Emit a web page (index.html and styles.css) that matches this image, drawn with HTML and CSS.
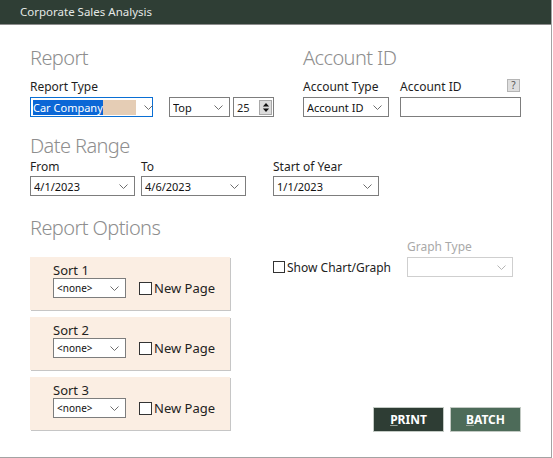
FILE: index.html
```html
<!DOCTYPE html>
<html lang="en">

<head>
    <meta charset="UTF-8">
    <meta name="viewport" content="width=device-width, initial-scale=1.0">
    <title>Corporate Sales Analysis</title>
    <link rel="stylesheet" href="styles.css">
</head>

<body>
    <div class="window">
        <div class="titlebar">Corporate Sales Analysis</div>

        <div class="content">
            <!-- Report / Account ID -->
            <div class="top">
                <section class="report">
                    <h2 class="heading">Report</h2>
                    <label class="lbl">Report Type</label>
                    <div class="row">
                        <div class="combo combo-type">
                            <span class="value"><span class="sel">Car Company</span></span>
                            <svg class="chev" viewBox="0 0 9 5"><path d="M0.5 0.5 L4.5 4.5 L8.5 0.5" /></svg>
                        </div>
                        <div class="combo combo-top">
                            <span class="value">Top</span>
                            <svg class="chev" viewBox="0 0 9 5"><path d="M0.5 0.5 L4.5 4.5 L8.5 0.5" /></svg>
                        </div>
                        <div class="spin">
                            <span class="value">25</span>
                            <span class="spin-btn">
                                <svg viewBox="0 0 9 12"><path d="M1 5 L4.5 1 L8 5 Z M1 7 L8 7 L4.5 11 Z" /></svg>
                            </span>
                        </div>
                    </div>
                </section>

                <section class="account">
                    <h2 class="heading">Account ID</h2>
                    <div class="fields">
                        <div class="field field-acctype">
                            <label class="lbl">Account Type</label>
                            <div class="combo">
                                <span class="value">Account ID</span>
                                <svg class="chev" viewBox="0 0 9 5"><path d="M0.5 0.5 L4.5 4.5 L8.5 0.5" /></svg>
                            </div>
                        </div>
                        <div class="field field-accid">
                            <div class="lbl lbl-row">
                                <span>Account ID</span>
                                <span class="help">?</span>
                            </div>
                            <div class="textbox"></div>
                        </div>
                    </div>
                </section>
            </div>

            <!-- Date Range -->
            <section class="dates">
                <h2 class="heading">Date Range</h2>
                <div class="date-row">
                    <div class="field field-from">
                        <label class="lbl">From</label>
                        <div class="combo">
                            <span class="value">4/1/2023</span>
                            <svg class="chev" viewBox="0 0 9 5"><path d="M0.5 0.5 L4.5 4.5 L8.5 0.5" /></svg>
                        </div>
                    </div>
                    <div class="field field-to">
                        <label class="lbl">To</label>
                        <div class="combo">
                            <span class="value">4/6/2023</span>
                            <svg class="chev" viewBox="0 0 9 5"><path d="M0.5 0.5 L4.5 4.5 L8.5 0.5" /></svg>
                        </div>
                    </div>
                    <div class="field field-soy">
                        <label class="lbl">Start of Year</label>
                        <div class="combo">
                            <span class="value">1/1/2023</span>
                            <svg class="chev" viewBox="0 0 9 5"><path d="M0.5 0.5 L4.5 4.5 L8.5 0.5" /></svg>
                        </div>
                    </div>
                </div>
            </section>

            <!-- Report Options -->
            <section class="options">
                <div class="options-left">
                    <h2 class="heading">Report Options</h2>
                    <div class="sort-panel">
                        <div class="sort-label">Sort 1</div>
                        <div class="sort-row">
                            <div class="combo combo-sort">
                                <span class="value">&lt;none&gt;</span>
                                <svg class="chev" viewBox="0 0 9 5"><path d="M0.5 0.5 L4.5 4.5 L8.5 0.5" /></svg>
                            </div>
                            <label class="check"><span class="box"></span>New Page</label>
                        </div>
                    </div>
                    <div class="sort-panel">
                        <div class="sort-label">Sort 2</div>
                        <div class="sort-row">
                            <div class="combo combo-sort">
                                <span class="value">&lt;none&gt;</span>
                                <svg class="chev" viewBox="0 0 9 5"><path d="M0.5 0.5 L4.5 4.5 L8.5 0.5" /></svg>
                            </div>
                            <label class="check"><span class="box"></span>New Page</label>
                        </div>
                    </div>
                    <div class="sort-panel">
                        <div class="sort-label">Sort 3</div>
                        <div class="sort-row">
                            <div class="combo combo-sort">
                                <span class="value">&lt;none&gt;</span>
                                <svg class="chev" viewBox="0 0 9 5"><path d="M0.5 0.5 L4.5 4.5 L8.5 0.5" /></svg>
                            </div>
                            <label class="check"><span class="box"></span>New Page</label>
                        </div>
                    </div>
                </div>

                <div class="options-right">
                    <div class="chart-row">
                        <label class="check check-chart"><span class="box"></span>Show Chart/Graph</label>
                        <div class="field field-graph">
                            <label class="lbl lbl-disabled">Graph Type</label>
                            <div class="combo combo-disabled">
                                <span class="value"></span>
                                <svg class="chev" viewBox="0 0 9 5"><path d="M0.5 0.5 L4.5 4.5 L8.5 0.5" /></svg>
                            </div>
                        </div>
                    </div>
                    <div class="actions">
                        <button class="btn btn-print"><u>P</u>RINT</button>
                        <button class="btn btn-batch"><u>B</u>ATCH</button>
                    </div>
                </div>
            </section>
        </div>
    </div>
</body>

</html>
```

FILE: styles.css
```css
body {
    margin: 0;
    padding: 0;
    font-family: "Noto Sans", "Open Sans", sans-serif;
    background: #fff;
    color: #1e1e1e;
}

/* 窗口外框 */
.window {
    width: 551px;
    height: 457px;
    border-right: 1px solid #a3a3a3;
    border-bottom: 1px solid #a3a3a3;
    overflow: hidden;
}

.titlebar {
    height: 24px;
    line-height: 24px;
    border-bottom: 1px solid #8c8c8c;
    background: #2f3e35;
    color: #e4e8e5;
    font-size: 11.5px;
    padding-left: 20px;
}

.content {
    padding: 21px 30px 0;
}

.heading {
    margin: 0;
    font-size: 20px;
    line-height: 24px;
    font-weight: 300;
    letter-spacing: -0.6px;
    color: #8e8e8e;
}

.lbl {
    display: block;
    font-size: 12px;
    line-height: 16px;
    color: #1e1e1e;
}

/* 下拉框 */
.combo {
    height: 20px;
    box-sizing: border-box;
    border: 1px solid #7d7d7d;
    background: #fff;
    display: flex;
    align-items: center;
    padding: 0 6px 0 3px;
    font-size: 11px;
    color: #111;
}

.combo .value {
    flex: 1;
    white-space: nowrap;
    overflow: hidden;
}

.chev {
    width: 9px;
    height: 5px;
    flex: none;
}

.chev path {
    fill: none;
    stroke: #6e6e6e;
    stroke-width: 1;
}

/* Report */
.top {
    display: flex;
}

.report {
    width: 273px;
}

.report .lbl {
    margin-top: 9px;
}

.row {
    display: flex;
    margin-top: 2px;
}

.combo-type {
    width: 123px;
    border-color: #0a6fd4;
    padding-left: 2px;
}

.combo-type .value {
    flex: none;
    width: 103px;
    height: 15px;
    line-height: 15px;
    background: #e5cdb5;
    margin-right: 8px;
}

.combo-type .sel {
    display: inline-block;
    background: #0b67d6;
    color: #fff;
}

.combo-top {
    width: 61px;
    margin-left: 16px;
}

.spin {
    width: 41px;
    height: 20px;
    margin-left: 3px;
    box-sizing: border-box;
    border: 1px solid #7d7d7d;
    display: flex;
    align-items: center;
    padding: 0 1px 0 3px;
    font-size: 11px;
}

.spin .value {
    flex: 1;
}

.spin-btn {
    width: 13px;
    height: 15px;
    box-sizing: border-box;
    background: #dcdcdc;
    border: 1px solid #a8a8a8;
    display: flex;
    align-items: center;
    justify-content: center;
}

.spin-btn svg {
    width: 8px;
    height: 11px;
    fill: #111;
}

/* Account ID */
.account {
    flex: 1;
}

.fields {
    display: flex;
    margin-top: 9px;
}

.field-acctype {
    width: 86px;
}

.field-accid {
    width: 121px;
    margin-left: 11px;
}

.field .lbl {
    margin-bottom: 2px;
}

.lbl-row {
    display: flex;
    justify-content: space-between;
    align-items: flex-start;
}

.help {
    width: 13px;
    height: 13px;
    margin: 0 1px 0 0;
    background: #dedede;
    border: 1px solid #b5b5b5;
    box-sizing: border-box;
    font-size: 10px;
    line-height: 11px;
    text-align: center;
    color: #555;
}

.textbox {
    height: 20px;
    box-sizing: border-box;
    border: 1px solid #7d7d7d;
}

/* Date Range */
.dates {
    margin-top: 17px;
}

.date-row {
    display: flex;
    margin-top: 1px;
}

.date-row .field .lbl {
    margin-bottom: 1px;
}

.field-from,
.field-to {
    width: 105px;
}

.field-to {
    margin-left: 6px;
}

.field-soy {
    width: 106px;
    margin-left: 27px;
}

/* Report Options */
.options {
    display: flex;
    margin-top: 20px;
}

.options-left {
    width: 243px;
}

.options-left .heading {
    margin-bottom: 17px;
}

.sort-panel {
    width: 200px;
    height: 53px;
    box-sizing: border-box;
    background: #fbeee3;
    box-shadow: 1px 1px 0 #c6c6c6;
    padding: 5px 0 0 23px;
    margin-bottom: 7px;
}

.sort-panel:last-child {
    margin-bottom: 0;
}

.sort-label {
    font-size: 13px;
    line-height: 16px;
    color: #222;
}

.sort-row {
    display: flex;
    align-items: center;
}

.combo-sort {
    width: 73px;
    font-size: 10px;
}

.check {
    display: flex;
    align-items: center;
    font-size: 13px;
    color: #222;
}

.check .box {
    width: 13px;
    height: 13px;
    box-sizing: border-box;
    border: 1px solid #333;
    background: #fff;
    margin-right: 2px;
}

.sort-row .check {
    margin-left: 13px;
}

.options-right {
    flex: 1;
    display: flex;
    flex-direction: column;
    padding-top: 23px;
}

.chart-row {
    display: flex;
    align-items: flex-end;
}

.check-chart {
    width: 134px;
    height: 20px;
    font-size: 12px;
}

.check-chart .box {
    width: 12px;
    height: 12px;
}

.field-graph {
    width: 106px;
}

.lbl-disabled {
    color: #a9a9a9;
}

.combo-disabled {
    border-color: #cfcfcf;
}

.combo-disabled .chev path {
    stroke: #b5b5b5;
}

/* 按钮 */
.actions {
    margin-top: auto;
    margin-bottom: -2px;
    display: flex;
    justify-content: flex-end;
    gap: 6px;
}

.btn {
    width: 71px;
    height: 25px;
    border: 1px solid #c3cac4;
    color: #fff;
    font-family: "Noto Sans", sans-serif;
    font-size: 12px;
    font-weight: bold;
    padding: 0;
    cursor: pointer;
}

.btn u {
    text-decoration-color: #9aa59d;
}

.btn-print {
    background: #2e3d34;
}

.btn-batch {
    background: #4d6b59;
}
```
